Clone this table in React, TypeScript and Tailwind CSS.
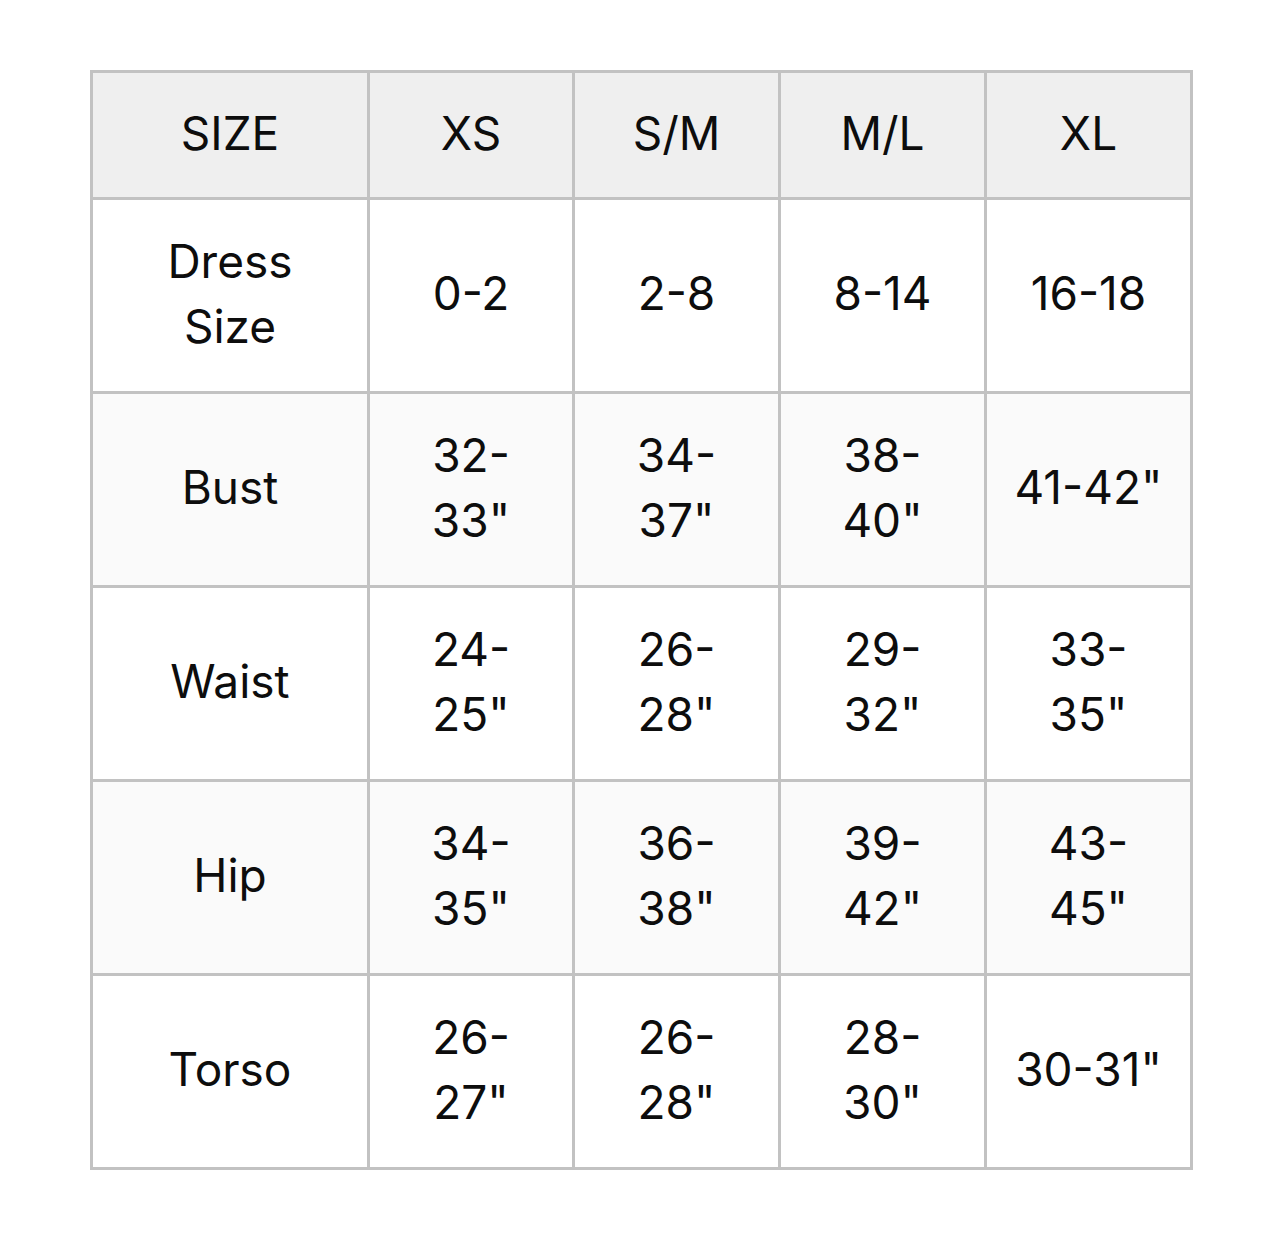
import React from 'react';

type Row = { label: string[]; values: string[][]; shaded?: boolean };

const sizes = ['XS', 'S/M', 'M/L', 'XL'];

const rows: Row[] = [
  { label: ['Dress', 'Size'], values: [['0-2'], ['2-8'], ['8-14'], ['16-18']] },
  { label: ['Bust'], values: [['32-', '33"'], ['34-', '37"'], ['38-', '40"'], ['41-42"']], shaded: true },
  { label: ['Waist'], values: [['24-', '25"'], ['26-', '28"'], ['29-', '32"'], ['33-', '35"']] },
  { label: ['Hip'], values: [['34-', '35"'], ['36-', '38"'], ['39-', '42"'], ['43-', '45"']], shaded: true },
  { label: ['Torso'], values: [['26-', '27"'], ['26-', '28"'], ['28-', '30"'], ['30-31"']] },
];

function Cell({ lines, bg }: { lines: string[]; bg: string }) {
  return (
    <div className={`flex flex-col items-center justify-center pb-1 text-center ${bg}`}>
      {lines.map((l, i) => (
        <span key={i} className="whitespace-nowrap leading-[65px]">{l}</span>
      ))}
    </div>
  );
}

export default function App() {
  return (
    <div className="min-h-[1233px] bg-white pl-[90px] pt-[70px]">
      <div
        className="grid w-[1103px] grid-cols-[274px_202px_203px_203px_203px] grid-rows-[124px_repeat(5,191px)] gap-[3px] border-[3px] border-[#c2c2c2] bg-[#c2c2c2] text-[46px] text-[#0d0d0d]"
        style={{ fontFamily: 'Inter, "Noto Sans", sans-serif' }}
      >
        <Cell lines={['SIZE']} bg="bg-[#efefef]" />
        {sizes.map(s => (
          <Cell key={s} lines={[s]} bg="bg-[#efefef]" />
        ))}
        {rows.map(r => (
          <React.Fragment key={r.label.join(' ')}>
            <Cell lines={r.label} bg={r.shaded ? 'bg-[#fafafa]' : 'bg-white'} />
            {r.values.map((v, i) => (
              <Cell key={i} lines={v} bg={r.shaded ? 'bg-[#fafafa]' : 'bg-white'} />
            ))}
          </React.Fragment>
        ))}
      </div>
    </div>
  );
}
